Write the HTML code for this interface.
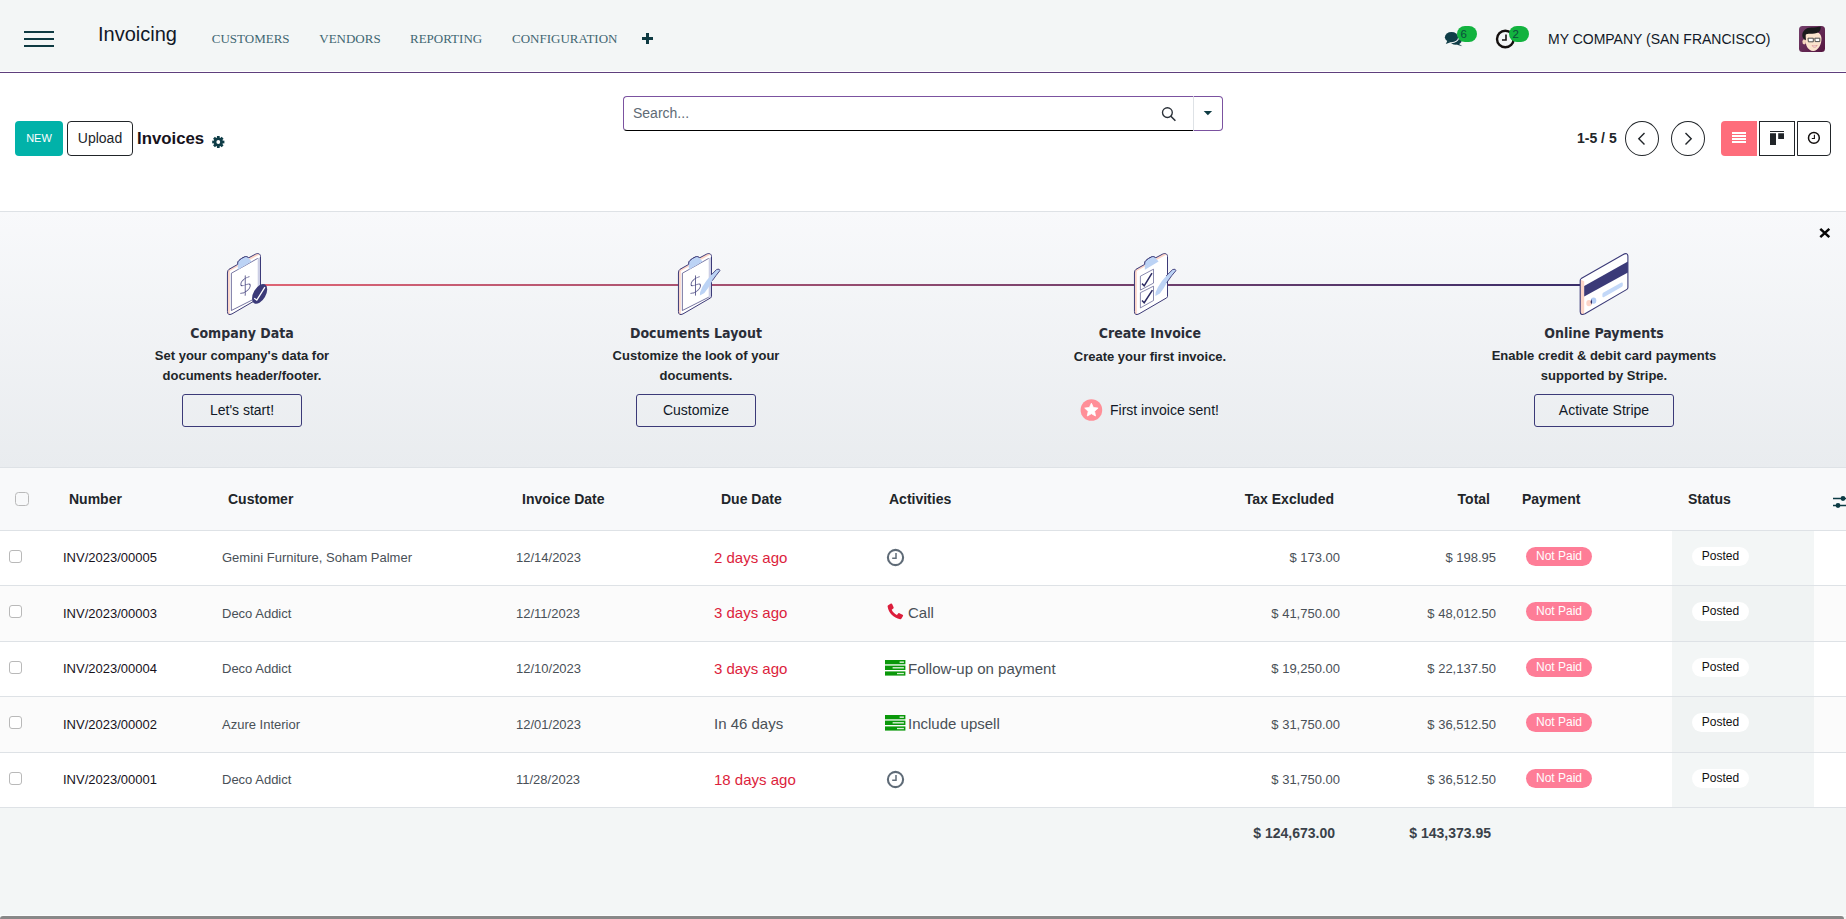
<!DOCTYPE html>
<html lang="en"><head><meta charset="utf-8"><title>Odoo - Invoices</title>
<style>
html,body{margin:0;padding:0}
body{width:1846px;height:919px;overflow:hidden;background:#f3f6f6;position:relative;font-family:"Liberation Sans",sans-serif;color:#212529}
.abs{position:absolute;white-space:nowrap}
.nav{left:0;top:0;width:1846px;height:71px;background:#f3f6f6}
.navline{left:0;top:71px;width:1846px;height:1px;background:#fff}
.navline2{left:0;top:72px;width:1846px;height:1px;background:#5e3f7d}
.cp{left:0;top:73px;width:1846px;height:138px;background:#fff}
.menu{font-family:"Liberation Serif",serif;font-size:13px;line-height:15px;color:#3f6672;top:31px}
.brand{font-size:20px;line-height:22px;color:#111827;left:98px;top:23px}
.company{font-size:14px;line-height:16px;color:#111827;left:1548px;top:31px}
.badge{top:26px;width:19.500px;height:16px;border-radius:8px;background:#12b33f;color:#0b4d3c;font-size:11.500px;line-height:16px;text-indent:3.500px}
.btn-new{left:15px;top:121px;width:48px;height:35px;border-radius:4px;background:#01b2a9;color:#fff;font-size:11px;line-height:35px;text-align:center}
.btn-up{left:67px;top:121px;width:64px;height:33px;border-radius:4px;border:1px solid #212529;color:#212529;font-size:14px;line-height:33px;text-align:center;background:#fff}
.title{left:137px;top:129px;font-weight:bold;font-size:16.800px;line-height:19px;color:#17121c}
.pager{left:1577px;top:130px;font-weight:bold;font-size:14px;line-height:16px;color:#212529}
.circ{top:121px;width:32px;height:33px;border:1px solid #212529;border-radius:50%}
.onb{left:0;top:211px;width:1846px;height:255px;border-top:1px solid #dee2e6;border-bottom:1px solid #dee2e6;background:linear-gradient(#f8f9fb,#e9ecef)}
.ot{font-family:"DejaVu Sans Condensed","DejaVu Sans",sans-serif;font-weight:bold;font-size:14px;line-height:16px;color:#2b2e38;text-align:center;width:300px;top:325px}
.od{font-weight:bold;font-size:13px;line-height:20px;color:#212529;text-align:center;width:300px;top:346px;white-space:normal}
.ob{top:394px;height:31px;border:1px solid #3b3a78;border-radius:3px;font-size:14px;line-height:31px;text-align:center;color:#111827}
.thead{background:#f8f9fa}
.hline{left:0;width:1846px;height:1px;background:#dee2e6}
.stripe{left:0;width:1846px;background:#fbfbfb}
.statusbg{background:#f3f6f6}
.statusbg2{background:#f0f3f3}
.th{font-weight:bold;font-size:14px;line-height:16px;color:#212529}
.tot{color:#3a424a}
.td{font-size:13px;line-height:15px;color:#495057}
.num{color:#17121c}
.due{font-size:15px;line-height:17px}
.late{color:#dc1e3c}
.cb{box-sizing:border-box;border:1px solid #b9b9b9;border-radius:3px;background:#fff}
.pill{height:19px;border-radius:10px;font-size:12px;line-height:18px;text-align:center}
.np{width:66px;background:#fe7d97;color:#fff}
.po{width:57px;background:#fff;color:#111}

</style></head>
<body>
<div class="abs nav"></div><div class="abs navline"></div><div class="abs navline2"></div>
<div class="abs" style="left:24px;top:31px;width:30px;height:2px;background:#0e3a42"></div>
<div class="abs" style="left:24px;top:38px;width:30px;height:2px;background:#0e3a42"></div>
<div class="abs" style="left:24px;top:45px;width:30px;height:2px;background:#0e3a42"></div>
<div class="abs brand">Invoicing</div>
<div class="abs menu" style="left:211.750px">CUSTOMERS</div>
<div class="abs menu" style="left:319.250px">VENDORS</div>
<div class="abs menu" style="left:410px">REPORTING</div>
<div class="abs menu" style="left:512px">CONFIGURATION</div>
<div class="abs" style="left:646px;top:33px;width:3px;height:11px;background:#0e3a42"></div><div class="abs" style="left:642px;top:37px;width:11px;height:3px;background:#0e3a42"></div>
<svg class="abs" style="left:1444px;top:31px" width="20" height="17" viewBox="0 0 20 17"><ellipse cx="11.800" cy="9.200" rx="6" ry="4.500" fill="#0f3d47"/><path d="M14.300 12.600L18.300 15.200 13 13.700z" fill="#0f3d47"/><ellipse cx="7.500" cy="6.200" rx="7.600" ry="6.100" fill="#f3f6f6"/><ellipse cx="7.500" cy="6.200" rx="6.600" ry="5.100" fill="#0f3d47"/><path d="M3.400 9.800L1.800 13.100 7.200 11z" fill="#0f3d47"/></svg>
<div class="abs badge" style="left:1457px">6</div>
<svg class="abs" style="left:1495px;top:29px" width="21" height="21" viewBox="0 0 21 21"><circle cx="10.300" cy="10" r="8.300" fill="none" stroke="#14100f" stroke-width="2.400"/><path d="M11 5.400v5.600H7" fill="none" stroke="#14100f" stroke-width="1.6"/></svg>
<div class="abs badge" style="left:1509px">2</div>
<div class="abs company">MY COMPANY (SAN FRANCISCO)</div>
<svg class="abs" style="left:1799px;top:26px" width="26" height="26" viewBox="0 0 26 26"><defs><linearGradient id="avg" x1="0" y1="0" x2="1" y2="1"><stop offset="0" stop-color="#74406c"/><stop offset="1" stop-color="#55153f"/></linearGradient><clipPath id="avc"><rect width="26" height="26" rx="3.500"/></clipPath></defs><g clip-path="url(#avc)"><rect width="26" height="26" fill="url(#avg)"/><ellipse cx="5.200" cy="15.800" rx="1.800" ry="2.600" fill="#f3d3ba"/><path d="M6.300 10C6.300 7 9 5.500 14 5.500S22.500 8 22.500 12.500c0 2.500-.5 5.500-2 8-1.500 2.600-3.800 4.500-6.300 4.500-2.700 0-5.400-2.200-6.700-5.300C6.500 17 6.300 13.500 6.300 10z" fill="#fbe3cd"/><path d="M3.300 9.500C3.300 5 7 1.600 12.500 1.600c3.500 0 6-.6 9.200-1 .2 2.600-.5 4.800-2.200 5.700-2 1.100-5.500 1.500-8.500 1.500-1.800 0-3.500.2-4.300.8-.3 1.800.1 3.600.3 5.500-2-.6-3.700-2-3.700-4.600z" fill="#1a1a1c"/><path d="M9 12.200h5.300v3.600H9.400zM15.800 12.200h5v3.400h-4.600z" fill="#fff" stroke="#3a3a3a" stroke-width=".9"/><path d="M13.200 19.600c1.600.5 3.400.4 4.900-.3-.4 1.300-1.400 1.900-2.500 1.900s-2-.6-2.400-1.600z" fill="#fff" stroke="#c8646e" stroke-width=".5"/></g></svg>
<div class="abs cp"></div>
<div class="abs btn-new">NEW</div>
<div class="abs btn-up">Upload</div>
<div class="abs title">Invoices</div>
<svg class="abs" style="left:212px;top:136px" width="13" height="12" viewBox="0 0 13 12"><g fill="#0f3d47"><circle cx="6.300" cy="6" r="4.600"/><g transform="translate(6.300 6)"><rect x="-1.350" y="-6.100" width="2.700" height="12.200"/><rect x="-1.350" y="-6.100" width="2.700" height="12.200" transform="rotate(45)"/><rect x="-1.350" y="-6.100" width="2.700" height="12.200" transform="rotate(90)"/><rect x="-1.350" y="-6.100" width="2.700" height="12.200" transform="rotate(135)"/></g></g><circle cx="6.300" cy="6" r="1.900" fill="#fff"/></svg>
<!-- search -->
<div class="abs" style="left:623px;top:96px;width:569px;height:33px;border:1px solid #7b52a0;border-bottom-color:#000;border-right:0;border-radius:4px 0 0 4px;background:#fff"></div>
<div class="abs" style="left:1193px;top:96px;width:28px;height:33px;border:1px solid #7b52a0;border-left-color:#dee2e6;border-radius:0 4px 4px 0;background:#fff"></div>
<div class="abs" style="left:633px;top:105px;font-size:14px;line-height:16px;color:#606a75">Search...</div>
<svg class="abs" style="left:1160px;top:105px" width="18" height="18" viewBox="0 0 18 18"><circle cx="7.400" cy="7.600" r="4.900" fill="none" stroke="#2a3038" stroke-width="1.350"/><path d="M10.900 11.200l4.500 4.500" stroke="#2a3038" stroke-width="1.600" fill="none"/></svg>
<svg class="abs" style="left:1203px;top:110px" width="10" height="6" viewBox="0 0 10 6"><path d="M.7 1h8.400L4.900 5.300z" fill="#0f3c44"/></svg>
<!-- pager -->
<div class="abs pager">1-5 / 5</div>
<div class="abs circ" style="left:1625px"></div>
<svg class="abs" style="left:1636px;top:131px" width="12" height="16" viewBox="0 0 12 16"><path d="M8.500 2L2.800 7.800l5.700 5.800" stroke="#212529" stroke-width="1.400" fill="none"/></svg>
<div class="abs circ" style="left:1671px"></div>
<svg class="abs" style="left:1682px;top:131px" width="12" height="16" viewBox="0 0 12 16"><path d="M3.500 2l5.700 5.800-5.700 5.800" stroke="#212529" stroke-width="1.400" fill="none"/></svg>
<!-- view switcher -->
<div class="abs" style="left:1721px;top:121px;width:36px;height:35px;background:#fe6d7b;border-radius:4px 0 0 4px"></div>
<div class="abs" style="left:1732px;top:132px;width:14px;height:2px;background:#fff;box-shadow:0 3px 0 #fff,0 6px 0 #fff,0 9px 0 #fff"></div>
<div class="abs" style="left:1759px;top:121px;width:34px;height:33px;border:1px solid #212529;background:#fff"></div>
<svg class="abs" style="left:1770px;top:131px" width="14" height="14" viewBox="0 0 14 14"><path d="M0 0h14v1H0zM0 2.200h6v11.700H0zM8.200 2.200H14v5.700H8.200z" fill="#212529"/></svg>
<div class="abs" style="left:1797px;top:121px;width:32px;height:33px;border:1px solid #212529;border-radius:0 4px 4px 0;background:#fff"></div>
<svg class="abs" style="left:1807px;top:131px" width="14" height="14" viewBox="0 0 14 14"><circle cx="6.900" cy="6.900" r="5.400" fill="none" stroke="#14100f" stroke-width="1.500"/><path d="M7.400 3.800v3.700H4.800" fill="none" stroke="#14100f" stroke-width="1.100"/></svg>
<div class="abs onb"></div>
<div class="abs" style="left:264px;top:284px;width:1317px;height:2px;background:linear-gradient(90deg,#de6474,#3a2d69)"></div>
<!-- icon 1: company data -->
<svg class="abs" style="will-change:transform;left:226px;top:252px" width="46" height="66" viewBox="0 0 46 66">
<defs><clipPath id="cb1"><path d="M1.440 21Q1.440 18.200 3 17.300L11.700 12.400C11.600 10.800 11.900 9.500 12.800 8.700C13.600 8 14.400 7.200 15.300 6.600L18.300 5C19.800 4.200 21.600 4.500 22.500 5.900L29.800 2C31.500 1.100 34.500 1.400 34.500 4.500V44.400Q34.500 45.300 33.700 45.800L6 61.900Q1.440 64 1.440 59.400Z"/></clipPath></defs><g clip-path="url(#cb1)"><rect width="46" height="66" fill="#fcd5c8"/><path d="M3.800 19.100L31.700 3.600 36 1.200V70H3.800Z" fill="#fff"/><path d="M31.700 6.400L36 4V60H31.700Z" fill="#cdcfe5"/></g><path d="M1.440 21Q1.440 18.200 3 17.300L11.700 12.400C11.600 10.800 11.900 9.500 12.800 8.700C13.600 8 14.400 7.200 15.300 6.600L18.300 5C19.800 4.200 21.600 4.500 22.500 5.900L29.800 2C31.500 1.100 34.500 1.400 34.500 4.500V44.400Q34.500 45.300 33.700 45.800L6 61.900Q1.440 64 1.440 59.400Z" fill="none" stroke="#3b3a78" stroke-width="1"/><path d="M31.700 6.400L5.360 21.240V58.500L31.700 45.200" fill="none" stroke="#3b3a78" stroke-width=".7"/><path d="M11.900 17.800L25.600 9.500 22.500 5.900C21.600 4.500 19.800 4.200 18.300 5L15.300 6.600C14.400 7.200 13.600 8 12.800 8.700C11.900 9.500 11.600 10.800 11.700 12.400Z" fill="#bcd3f5"/><path d="M11.700 12.400C11.600 10.800 11.900 9.500 12.800 8.700C13.600 8 14.400 7.200 15.300 6.600L18.300 5C19.800 4.200 21.600 4.500 22.500 5.900" fill="none" stroke="#3b3a78" stroke-width="1"/><text x="0" y="0" transform="matrix(1 -.577 0 1 12.300 44.500)" font-family="DejaVu Sans Light, DejaVu Sans, sans-serif" font-weight="200" font-size="22.500" fill="#3b3a78" stroke="#fff" stroke-width=".2">$</text><ellipse cx="33.640" cy="41.900" rx="10.900" ry="6.100" transform="rotate(-60 33.640 41.900)" fill="#3b3a78"/><path d="M28.200 46.300l2.600 1.700 8.100-12.800" fill="none" stroke="#fff" stroke-width="1.300"/>
</svg>
<!-- icon 2: documents layout -->
<svg class="abs" style="will-change:transform;left:676.700px;top:252px" width="46" height="66" viewBox="0 0 46 66">
<defs><clipPath id="cb2"><path d="M1.440 21Q1.440 18.200 3 17.300L11.700 12.400C11.600 10.800 11.900 9.500 12.800 8.700C13.600 8 14.400 7.200 15.300 6.600L18.300 5C19.800 4.200 21.600 4.500 22.500 5.900L29.800 2C31.500 1.100 34.500 1.400 34.500 4.500V44.400Q34.500 45.300 33.700 45.800L6 61.900Q1.440 64 1.440 59.400Z"/></clipPath></defs><g clip-path="url(#cb2)"><rect width="46" height="66" fill="#fcd5c8"/><path d="M3.800 19.100L31.700 3.600 36 1.200V70H3.800Z" fill="#fff"/><path d="M31.700 6.400L36 4V60H31.700Z" fill="#cdcfe5"/></g><path d="M1.440 21Q1.440 18.200 3 17.300L11.700 12.400C11.600 10.800 11.900 9.500 12.800 8.700C13.600 8 14.400 7.200 15.300 6.600L18.300 5C19.800 4.200 21.600 4.500 22.500 5.900L29.800 2C31.500 1.100 34.500 1.400 34.500 4.500V44.400Q34.500 45.300 33.700 45.800L6 61.900Q1.440 64 1.440 59.400Z" fill="none" stroke="#3b3a78" stroke-width="1"/><path d="M31.700 6.400L5.360 21.240V58.500L31.700 45.200" fill="none" stroke="#3b3a78" stroke-width=".7"/><path d="M11.900 17.800L25.600 9.500 22.500 5.900C21.600 4.500 19.800 4.200 18.300 5L15.300 6.600C14.400 7.200 13.600 8 12.800 8.700C11.900 9.500 11.600 10.800 11.700 12.400Z" fill="#bcd3f5"/><path d="M11.700 12.400C11.600 10.800 11.900 9.500 12.800 8.700C13.600 8 14.400 7.200 15.300 6.600L18.300 5C19.800 4.200 21.600 4.500 22.500 5.900" fill="none" stroke="#3b3a78" stroke-width="1"/><text x="0" y="0" transform="matrix(1 -.577 0 1 11.500 44.500)" font-family="DejaVu Sans Light, DejaVu Sans, sans-serif" font-weight="200" font-size="22.500" fill="#3b3a78" stroke="#fff" stroke-width=".2">$</text><path d="M22.900 43.500L27.400 41 31.300 35.700 35.300 28.700 39.200 23.300 42.900 18.600Q42.800 16.300 39.700 17.400L34.400 22.800 29.400 28.700 25.400 34.800 23.100 40.200Z" fill="#bcd3f5"/><path d="M34.600 22.600L39.700 17.400Q42.800 16.300 42.900 18.600L39.200 23.300 35.300 28.700" fill="none" stroke="#3b3a78" stroke-width=".9"/>
</svg>
<!-- icon 3: create invoice -->
<svg class="abs" style="left:1132.800px;top:251.500px" width="46" height="66" viewBox="0 0 46 66">
<defs><clipPath id="cb3"><path d="M1.440 21Q1.440 18.200 3 17.300L11.700 12.400C11.600 10.800 11.900 9.500 12.800 8.700C13.600 8 14.400 7.200 15.300 6.600L18.300 5C19.800 4.200 21.600 4.500 22.500 5.900L29.800 2C31.500 1.100 34.500 1.400 34.500 4.500V44.400Q34.500 45.300 33.700 45.800L6 61.900Q1.440 64 1.440 59.400Z"/></clipPath></defs><g clip-path="url(#cb3)"><rect width="46" height="66" fill="#fcd5c8"/><path d="M3.800 19.100L31.700 3.600 36 1.200V70H3.800Z" fill="#fff"/></g><path d="M1.440 21Q1.440 18.200 3 17.300L11.700 12.400C11.600 10.800 11.900 9.500 12.800 8.700C13.600 8 14.400 7.200 15.300 6.600L18.300 5C19.800 4.200 21.600 4.500 22.500 5.900L29.800 2C31.500 1.100 34.500 1.400 34.500 4.500V44.400Q34.500 45.300 33.700 45.800L6 61.900Q1.440 64 1.440 59.400Z" fill="none" stroke="#3b3a78" stroke-width="1"/><path d="M11.900 17.800L25.600 9.500 22.500 5.900C21.600 4.500 19.800 4.200 18.300 5L15.300 6.600C14.400 7.200 13.600 8 12.800 8.700C11.900 9.500 11.600 10.800 11.700 12.400Z" fill="#bcd3f5"/><path d="M11.700 12.400C11.600 10.800 11.900 9.500 12.800 8.700C13.600 8 14.400 7.200 15.300 6.600L18.300 5C19.800 4.200 21.600 4.500 22.500 5.900" fill="none" stroke="#3b3a78" stroke-width="1"/><path d="M7.400 24.200L20.500 17.200V31.100L7.400 38.100ZM7.400 40.700L20.500 34.200V48.500L7.400 55.900Z" fill="none" stroke="#3b3a78" stroke-width=".6"/><path d="M9 31.600l2.200 2.200 7.800-12.700M9 48.500l2.200 2.200 8.200-12.600" fill="none" stroke="#2b2a62" stroke-width="1.500"/><g transform="translate(-1.500 .4)"><path d="M23.900 43.500L28.400 41 32.300 35.700 36.300 28.700 40.200 23.300 44.400 18.300Q44.300 16 41.200 17.100L35.400 22.800 30.400 28.700 26.400 34.800 24.100 40.200Z" fill="#bcd3f5"/><path d="M34.600 23.600L41.200 17.100Q44.300 16 44.400 18.300L40.200 23.300 35.300 30.200" fill="none" stroke="#3b3a78" stroke-width=".9"/></g>
</svg>
<!-- icon 4: online payments -->
<svg class="abs" style="left:1579px;top:252px" width="52" height="66" viewBox="0 0 52 66">
<path d="M2.200 26.600L43.800 2.700Q48.900 -.2 48.900 4.600V35.600Q48.900 36.800 47.900 37.400L6 61.800Q1.200 63.800 1.200 59.600V28.600Q1.200 27.200 2.200 26.600Z" fill="#fff"/>
<path d="M1.200 27.400L5.200 29.200V62.200Q1.200 63.800 1.200 59.600Z" fill="#fcd5c8"/>
<path d="M5.200 34.100L48.900 9.600V20.600L5.200 44.600Z" fill="#3b3a78"/>
<path d="M24.500 40.500L42 30.800Q43.800 30 43.800 31.600V33.200Q43.800 34.400 42.600 35.100L25.100 45Q23.400 45.800 23.400 44.200V42.300Q23.400 41.100 24.500 40.500Z" fill="#c3d8f8"/>
<ellipse cx="14.600" cy="48.600" rx="2.700" ry="3.200" fill="#b4cdf5"/>
<ellipse cx="10" cy="51.100" rx="2.700" ry="3.200" fill="#fcd5c8"/>
<path d="M12.300 47Q13.700 49.500 12.400 52.800Q10.800 50 12.300 47Z" fill="#26245c"/>
<path d="M2.200 26.600L43.800 2.700Q48.900 -.2 48.900 4.600V35.600Q48.900 36.800 47.900 37.400L6 61.800Q1.200 63.800 1.200 59.600V28.600Q1.200 27.200 2.200 26.600Z" fill="none" stroke="#3b3a78" stroke-width="1.100"/>
</svg>
<!-- step texts -->
<div class="abs ot" style="left:92px">Company Data</div>
<div class="abs od" style="left:92px">Set your company's data for<br>documents header/footer.</div>
<div class="abs ob" style="left:182px;width:118px">Let's start!</div>
<div class="abs ot" style="left:546px">Documents Layout</div>
<div class="abs od" style="left:546px">Customize the look of your<br>documents.</div>
<div class="abs ob" style="left:636px;width:118px">Customize</div>
<div class="abs ot" style="left:1000px">Create Invoice</div>
<div class="abs od" style="left:1000px;top:347px">Create your first invoice.</div>
<svg class="abs" style="left:1080px;top:399px" width="23" height="23" viewBox="0 0 23 23"><circle cx="11.400" cy="11" r="10.800" fill="#ff8f98"/><path d="M11.400 4.200l2 4.300 4.700.6-3.500 3.200.9 4.700-4.100-2.300-4.100 2.300.9-4.700L4.700 9.100l4.700-.6z" fill="#fff" stroke="#fff" stroke-width=".8" stroke-linejoin="round"/></svg>
<div class="abs" style="left:1110px;top:402px;font-size:14px;line-height:16px;color:#111827">First invoice sent!</div>
<div class="abs ot" style="left:1454px">Online Payments</div>
<div class="abs od" style="left:1454px">Enable credit &amp; debit card payments<br>supported by Stripe.</div>
<div class="abs ob" style="left:1534px;width:138px">Activate Stripe</div>
<svg class="abs" style="left:1818px;top:227px" width="14" height="12" viewBox="0 0 14 12"><path d="M2.300 1.800l9 8.400M11.300 1.800l-9 8.400" stroke="#060606" stroke-width="2.500" fill="none"/></svg>
<div class="abs thead" style="left:0;top:468px;width:1846px;height:62px"></div>
<div class="abs" style="left:0;top:531px;width:1846px;height:276px;background:#fff"></div>
<div class="abs statusbg" style="left:1672px;top:531px;width:142px;height:276px"></div>
<div class="abs hline" style="top:530px"></div>
<div class="abs hline" style="top:585px"></div>
<div class="abs hline" style="top:641px"></div>
<div class="abs hline" style="top:696px"></div>
<div class="abs hline" style="top:752px"></div>
<div class="abs hline" style="top:807px"></div>
<span class="abs cb" style="left:15px;top:492px;width:14px;height:14px;background:transparent;border-radius:3.500px"></span>
<div class="abs th" style="left:69px;top:491px">Number</div>
<div class="abs th" style="left:228px;top:491px">Customer</div>
<div class="abs th" style="left:522px;top:491px">Invoice Date</div>
<div class="abs th" style="left:721px;top:491px">Due Date</div>
<div class="abs th" style="left:889px;top:491px">Activities</div>
<div class="abs th" style="right:512px;top:491px">Tax Excluded</div>
<div class="abs th" style="right:356px;top:491px">Total</div>
<div class="abs th" style="left:1522px;top:491px">Payment</div>
<div class="abs th" style="left:1688px;top:491px">Status</div>
<svg class="abs" style="left:1830px;top:494px" width="16" height="16" viewBox="0 0 16 16"><path d="M3 4.5h13M3 11.5h13" stroke="#0c3b44" stroke-width="1.3" fill="none"/><circle cx="13" cy="4.5" r="2.4" fill="#0c3b44"/><circle cx="8" cy="11.5" r="2.4" fill="#0c3b44"/></svg>
<span class="abs cb" style="left:9px;top:550px;width:13px;height:13px"></span>
<div class="abs td num" style="left:63px;top:550px">INV/2023/00005</div>
<div class="abs td" style="left:222px;top:550px">Gemini Furniture, Soham Palmer</div>
<div class="abs td" style="left:516px;top:550px">12/14/2023</div>
<div class="abs td due late" style="left:714px;top:549px">2 days ago</div>
<svg class="abs" style="left:886px;top:547.5px" width="19" height="19" viewBox="0 0 19 19"><circle cx="9.5" cy="9.5" r="7.6" fill="none" stroke="#5f6b77" stroke-width="2.1"/><path d="M10 5v5.2H6.2" fill="none" stroke="#626e7a" stroke-width="1.5"/></svg>
<div class="abs td" style="right:506px;top:550px">$ 173.00</div>
<div class="abs td" style="right:350px;top:550px">$ 198.95</div>
<div class="abs pill np" style="left:1526px;top:547px">Not Paid</div>
<div class="abs pill po" style="left:1692px;top:547px">Posted</div>
<div class="abs stripe" style="top:586px;height:55px"></div>
<div class="abs statusbg2" style="left:1672px;top:586px;width:142px;height:55px"></div>
<span class="abs cb" style="left:9px;top:605px;width:13px;height:13px"></span>
<div class="abs td num" style="left:63px;top:606px">INV/2023/00003</div>
<div class="abs td" style="left:222px;top:606px">Deco Addict</div>
<div class="abs td" style="left:516px;top:606px">12/11/2023</div>
<div class="abs td due late" style="left:714px;top:604px">3 days ago</div>
<svg class="abs" style="left:887px;top:603px" width="17" height="17" viewBox="0 0 17 17"><path d="M1.2 2.2 L3.9 0.6 C4.4 0.3 4.9 0.5 5.1 1 L6.6 4.3 C6.8 4.8 6.7 5.2 6.3 5.5 L4.7 6.7 C5.8 9 7.6 10.9 9.9 12.1 L11.2 10.5 C11.5 10.1 12 10 12.4 10.2 L15.6 11.8 C16.1 12 16.3 12.5 16 13 L14.5 15.6 C14.2 16.1 13.7 16.3 13.1 16.2 C6.6 15.2 1.5 10 0.6 3.6 C0.5 3 0.7 2.5 1.2 2.2 Z" fill="#dc1e3c"/></svg>
<div class="abs td due" style="left:908px;top:604px">Call</div>
<div class="abs td" style="right:506px;top:606px">$ 41,750.00</div>
<div class="abs td" style="right:350px;top:606px">$ 48,012.50</div>
<div class="abs pill np" style="left:1526px;top:602px">Not Paid</div>
<div class="abs pill po" style="left:1692px;top:602px">Posted</div>
<span class="abs cb" style="left:9px;top:661px;width:13px;height:13px"></span>
<div class="abs td num" style="left:63px;top:661px">INV/2023/00004</div>
<div class="abs td" style="left:222px;top:661px">Deco Addict</div>
<div class="abs td" style="left:516px;top:661px">12/10/2023</div>
<div class="abs td due late" style="left:714px;top:660px">3 days ago</div>
<svg class="abs" style="left:885px;top:659.5px" width="21" height="16" viewBox="0 0 21 16"><rect x="0" y="0" width="20.4" height="4.3" fill="#0a980a"/><rect x="0" y="5.6" width="20.4" height="4.4" fill="#0a980a"/><rect x="0" y="11.4" width="20.4" height="4.2" fill="#0a980a"/><rect x="14.6" y="1.5" width="4.3" height="1.3" fill="#f4faf2"/><rect x="7.6" y="7.1" width="11.3" height="1.4" fill="#d9efd6"/><rect x="12" y="12.9" width="6.9" height="1.3" fill="#d9efd6"/></svg>
<div class="abs td due" style="left:908px;top:660px">Follow-up on payment</div>
<div class="abs td" style="right:506px;top:661px">$ 19,250.00</div>
<div class="abs td" style="right:350px;top:661px">$ 22,137.50</div>
<div class="abs pill np" style="left:1526px;top:658px">Not Paid</div>
<div class="abs pill po" style="left:1692px;top:658px">Posted</div>
<div class="abs stripe" style="top:697px;height:55px"></div>
<div class="abs statusbg2" style="left:1672px;top:697px;width:142px;height:55px"></div>
<span class="abs cb" style="left:9px;top:716px;width:13px;height:13px"></span>
<div class="abs td num" style="left:63px;top:717px">INV/2023/00002</div>
<div class="abs td" style="left:222px;top:717px">Azure Interior</div>
<div class="abs td" style="left:516px;top:717px">12/01/2023</div>
<div class="abs td due" style="left:714px;top:715px">In 46 days</div>
<svg class="abs" style="left:885px;top:714.5px" width="21" height="16" viewBox="0 0 21 16"><rect x="0" y="0" width="20.4" height="4.3" fill="#0a980a"/><rect x="0" y="5.6" width="20.4" height="4.4" fill="#0a980a"/><rect x="0" y="11.4" width="20.4" height="4.2" fill="#0a980a"/><rect x="14.6" y="1.5" width="4.3" height="1.3" fill="#f4faf2"/><rect x="7.6" y="7.1" width="11.3" height="1.4" fill="#d9efd6"/><rect x="12" y="12.9" width="6.9" height="1.3" fill="#d9efd6"/></svg>
<div class="abs td due" style="left:908px;top:715px">Include upsell</div>
<div class="abs td" style="right:506px;top:717px">$ 31,750.00</div>
<div class="abs td" style="right:350px;top:717px">$ 36,512.50</div>
<div class="abs pill np" style="left:1526px;top:713px">Not Paid</div>
<div class="abs pill po" style="left:1692px;top:713px">Posted</div>
<span class="abs cb" style="left:9px;top:772px;width:13px;height:13px"></span>
<div class="abs td num" style="left:63px;top:772px">INV/2023/00001</div>
<div class="abs td" style="left:222px;top:772px">Deco Addict</div>
<div class="abs td" style="left:516px;top:772px">11/28/2023</div>
<div class="abs td due late" style="left:714px;top:771px">18 days ago</div>
<svg class="abs" style="left:886px;top:769.5px" width="19" height="19" viewBox="0 0 19 19"><circle cx="9.5" cy="9.5" r="7.6" fill="none" stroke="#5f6b77" stroke-width="2.1"/><path d="M10 5v5.2H6.2" fill="none" stroke="#626e7a" stroke-width="1.5"/></svg>
<div class="abs td" style="right:506px;top:772px">$ 31,750.00</div>
<div class="abs td" style="right:350px;top:772px">$ 36,512.50</div>
<div class="abs pill np" style="left:1526px;top:769px">Not Paid</div>
<div class="abs pill po" style="left:1692px;top:769px">Posted</div>
<div class="abs th tot" style="right:511px;top:825px">$ 124,673.00</div>
<div class="abs th tot" style="right:355px;top:825px">$ 143,373.95</div>
<div class="abs" style="left:0;top:915px;width:1846px;height:1px;background:#fbfcfc"></div>
<div class="abs" style="left:0;top:916px;width:1844px;height:6px;background:#888;border-radius:3px"></div>
</body></html>
